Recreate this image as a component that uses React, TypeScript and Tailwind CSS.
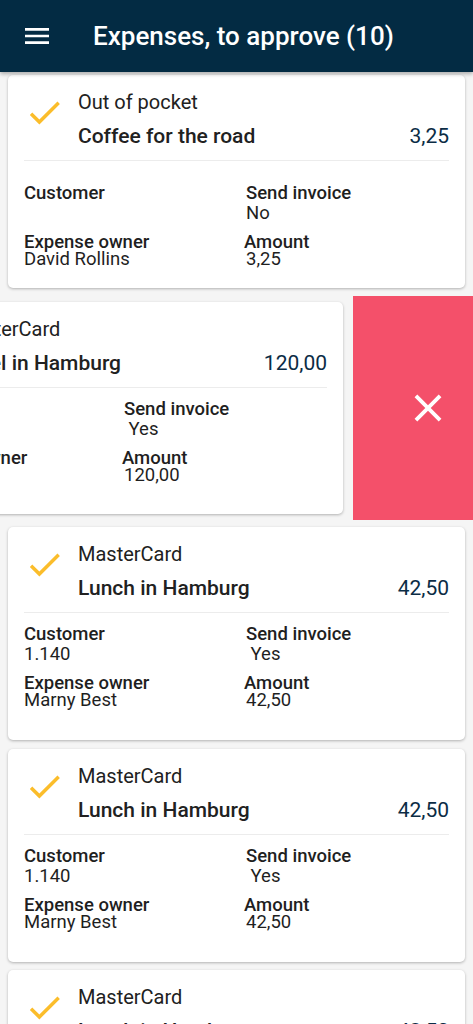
type Expense = {
  source: string;
  title: string;
  total: string;
  customer: string;
  sendInvoice: string;
  owner: string;
  amount: string;
};

const expenses: Expense[] = [
  { source: "Out of pocket", title: "Coffee for the road", total: "3,25", customer: "", sendInvoice: "No", owner: "David Rollins", amount: "3,25" },
  { source: "MasterCard", title: "Hotel in Hamburg", total: "120,00", customer: "1.140", sendInvoice: " Yes", owner: "Marny Best", amount: "120,00" },
  { source: "MasterCard", title: "Lunch in Hamburg", total: "42,50", customer: "1.140", sendInvoice: " Yes", owner: "Marny Best", amount: "42,50" },
  { source: "MasterCard", title: "Lunch in Hamburg", total: "42,50", customer: "1.140", sendInvoice: " Yes", owner: "Marny Best", amount: "42,50" },
  { source: "MasterCard", title: "Lunch in Hamburg", total: "42,50", customer: "1.140", sendInvoice: " Yes", owner: "Marny Best", amount: "42,50" },
];

function CheckIcon() {
  return (
    <svg viewBox="0 0 24 24" className="w-[41px] h-[41px] shrink-0 mt-[2px]" fill="#fbbd2b">
      <path d="M9 16.17L4.83 12l-1.42 1.41L9 19 21 7l-1.41-1.41z" />
    </svg>
  );
}

function ExpenseCard({ expense, className = "" }: { expense: Expense; className?: string }) {
  const noCustomer = expense.customer === "";
  return (
    <div className={`bg-white rounded-[5px] shadow-[0_1px_3px_rgba(0,0,0,0.28)] px-4 pt-[15px] overflow-hidden ${className}`}>
      <div className="flex">
        <CheckIcon />
        <div className="flex-1 ml-[13px]">
          <div className="text-[20px] leading-[24px] text-[#212121]">{expense.source}</div>
          <div className="flex justify-between mt-[10px] text-[21px] leading-[25px]">
            <span className="font-medium text-[#212121] whitespace-nowrap">{expense.title}</span>
            <span className="text-[#0b2c45]">{expense.total}</span>
          </div>
        </div>
      </div>
      <div className="h-px bg-[#ececec] mt-[11px]" />
      <div className={`grid grid-cols-[222px_1fr] text-[18.5px] text-[#1f1f1f] ${noCustomer ? "mt-[22px]" : "mt-[11px]"}`}>
        <div className="leading-[20px]">
          <div className="font-medium">Customer</div>
          <div>{expense.customer}</div>
        </div>
        <div className="leading-[20px]">
          <div className="font-medium">Send invoice</div>
          <div className="whitespace-pre">{expense.sendInvoice}</div>
        </div>
        <div className="leading-[17px] mt-[11px] whitespace-nowrap">
          <div className="font-medium">Expense owner</div>
          <div>{expense.owner}</div>
        </div>
        <div className="leading-[17px] mt-[11px]">
          <div className="font-medium -ml-[2px]">Amount</div>
          <div>{expense.amount}</div>
        </div>
      </div>
    </div>
  );
}

export default function App() {
  return (
    <div className="min-h-screen bg-[#f5f5f5] overflow-hidden" style={{ fontFamily: "Roboto, 'Noto Sans', sans-serif" }}>
      <header className="relative z-10 h-[72px] bg-[#032b43] flex items-center pl-[21px] shadow-[0_2px_4px_rgba(0,0,0,0.3)]">
        <svg viewBox="0 0 24 24" className="w-[32px] h-[32px]" fill="white">
          <path d="M3 18h18v-2H3v2zm0-5h18v-2H3v2zm0-7v2h18V6H3z" />
        </svg>
        <h1 className="ml-[40px] text-[26px] leading-[30px] font-medium text-white whitespace-nowrap">Expenses, to approve (10)</h1>
      </header>

      <div className="flex flex-col">
        <ExpenseCard expense={expenses[0]} className="mx-2 mt-[3px] h-[213px]" />

        <div className="flex mt-[8px] h-[224px] w-[473px]">
          <ExpenseCard expense={expenses[1]} className="ml-[-114px] w-[457px] shrink-0 mt-[6px] h-[212px]" />
          <div className="ml-[10px] w-[120px] shrink-0 bg-[#f4506a] flex items-center pl-[52px]">
            <svg viewBox="0 0 24 24" className="w-[46px] h-[46px]" fill="white">
              <path d="M19 6.41L17.59 5 12 10.59 6.41 5 5 6.41 10.59 12 5 17.59 6.41 19 12 13.41 17.59 19 19 17.59 13.41 12z" />
            </svg>
          </div>
        </div>

        <ExpenseCard expense={expenses[2]} className="mx-2 mt-[7px] h-[213px]" />
        <ExpenseCard expense={expenses[3]} className="mx-2 mt-[9px] h-[213px]" />
        <ExpenseCard expense={expenses[4]} className="mx-2 mt-[8px] h-[213px]" />
      </div>
    </div>
  );
}
